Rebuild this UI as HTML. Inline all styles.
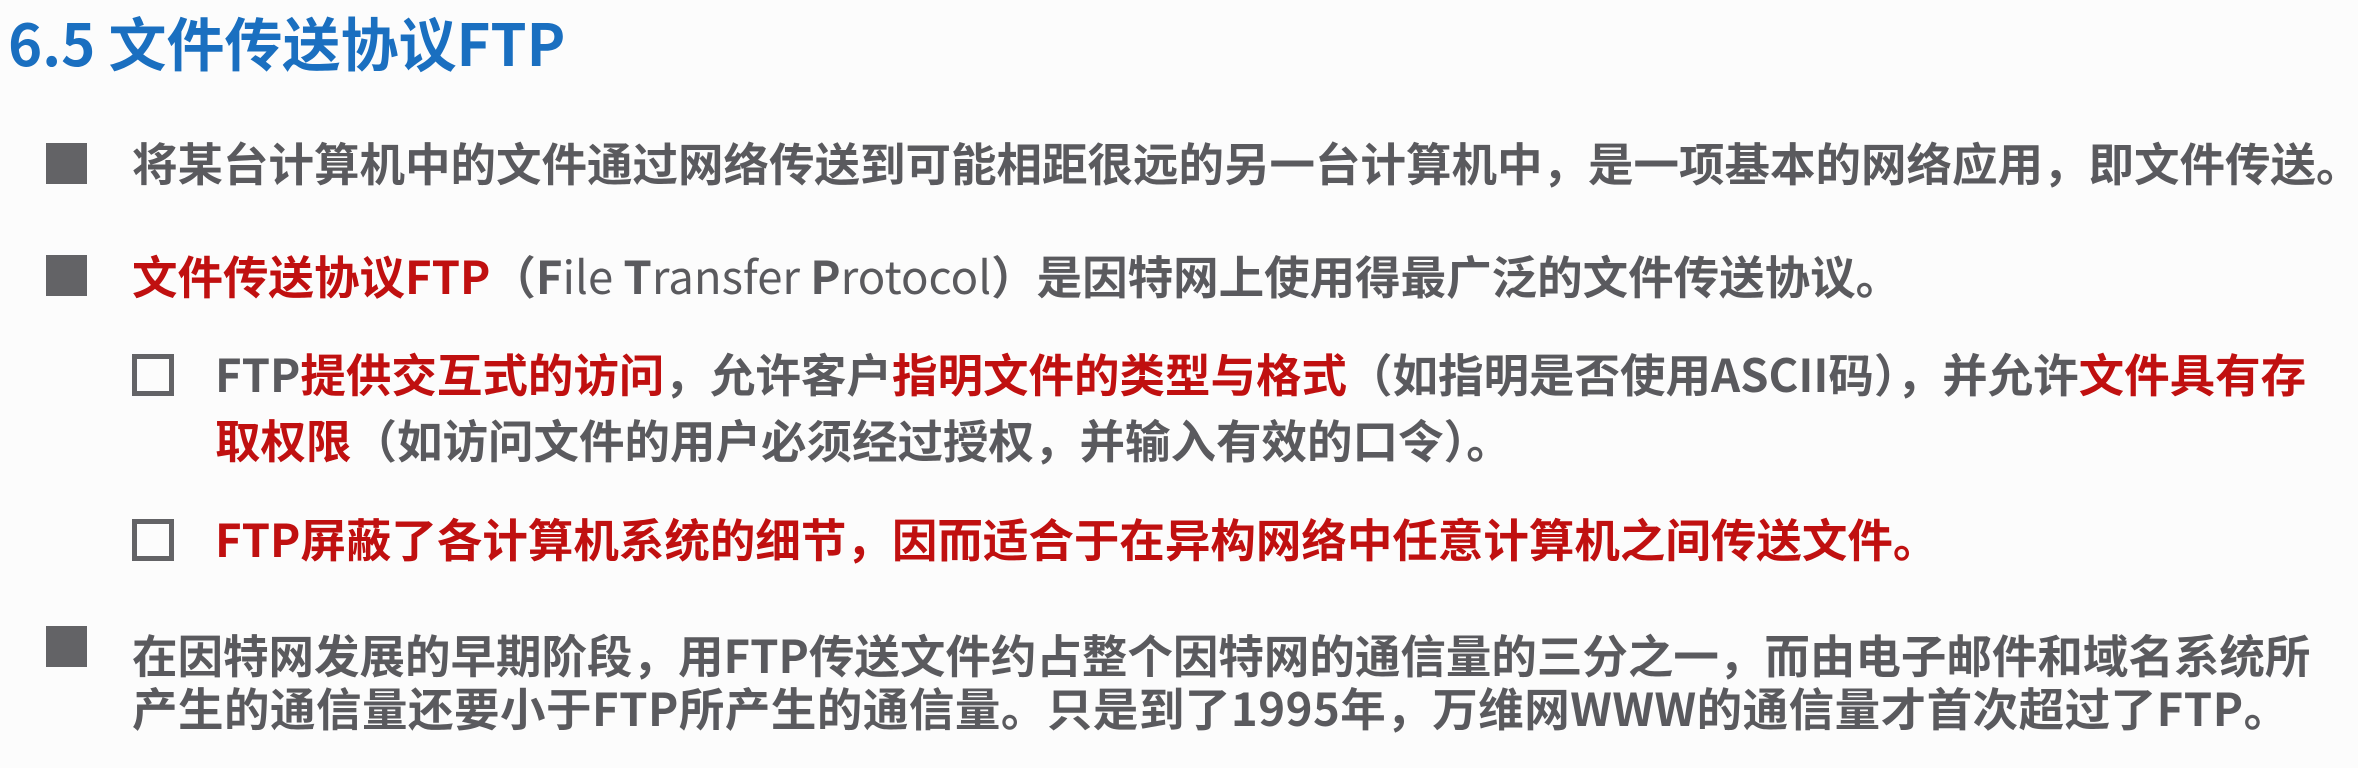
<!DOCTYPE html>
<html><head><meta charset="utf-8"><style>
html,body{margin:0;padding:0;}
body{width:2358px;height:768px;background:#fcfcfc;position:relative;overflow:hidden;font-family:"Liberation Sans","Noto Sans CJK SC",sans-serif;}
.l{position:absolute;white-space:nowrap;font-family:"Noto Sans CJK SC",sans-serif;font-weight:bold;font-size:45.5px;line-height:52px;color:#5a5a5e;}
.r{color:#c01010;}
.n{font-weight:normal;}
.sq{position:absolute;background:#636366;width:41px;height:41px;}
.hs{position:absolute;width:32px;height:32px;border:5px solid #636366;}
</style></head><body>
<div class="l" style="left:8px;top:6px;font-size:58px;line-height:70px;color:#1a6fc0;">6.5 文件传送协议FTP</div>

<div class="sq" style="left:46px;top:143px;"></div>
<div class="l" style="left:132px;top:136px;">将某台计算机中的文件通过网络传送到可能相距很远的另一台计算机中，是一项基本的网络应用，即文件传送。</div>

<div class="sq" style="left:46px;top:255px;"></div>
<div class="l" style="left:132px;top:249px;"><span class="r">文件传送协议FTP</span>（F<span class="n">ile </span>T<span class="n">ransfer </span>P<span class="n">rotocol</span>）是因特网上使用得最广泛的文件传送协议。</div>

<div class="hs" style="left:132px;top:354px;"></div>
<div class="l" style="left:215px;top:347px;">FTP<span class="r">提供交互式的访问</span>，允许客户<span class="r">指明文件的类型与格式</span>（如指明是否使用ASCII码），并允许<span class="r">文件具有存</span></div>
<div class="l" style="left:215px;top:413px;"><span class="r">取权限</span>（如访问文件的用户必须经过授权，并输入有效的口令）。</div>

<div class="hs" style="left:132px;top:519px;"></div>
<div class="l r" style="left:215px;top:512px;">FTP屏蔽了各计算机系统的细节，因而适合于在异构网络中任意计算机之间传送文件。</div>

<div class="sq" style="left:46px;top:626px;"></div>
<div class="l" style="left:132px;top:628px;">在因特网发展的早期阶段，用FTP传送文件约占整个因特网的通信量的三分之一，而由电子邮件和域名系统所</div>
<div class="l" style="left:132px;top:681px;letter-spacing:0.5px;">产生的通信量还要小于FTP所产生的通信量。只是到了1995年，万维网WWW的通信量才首次超过了FTP。</div>
</body></html>
